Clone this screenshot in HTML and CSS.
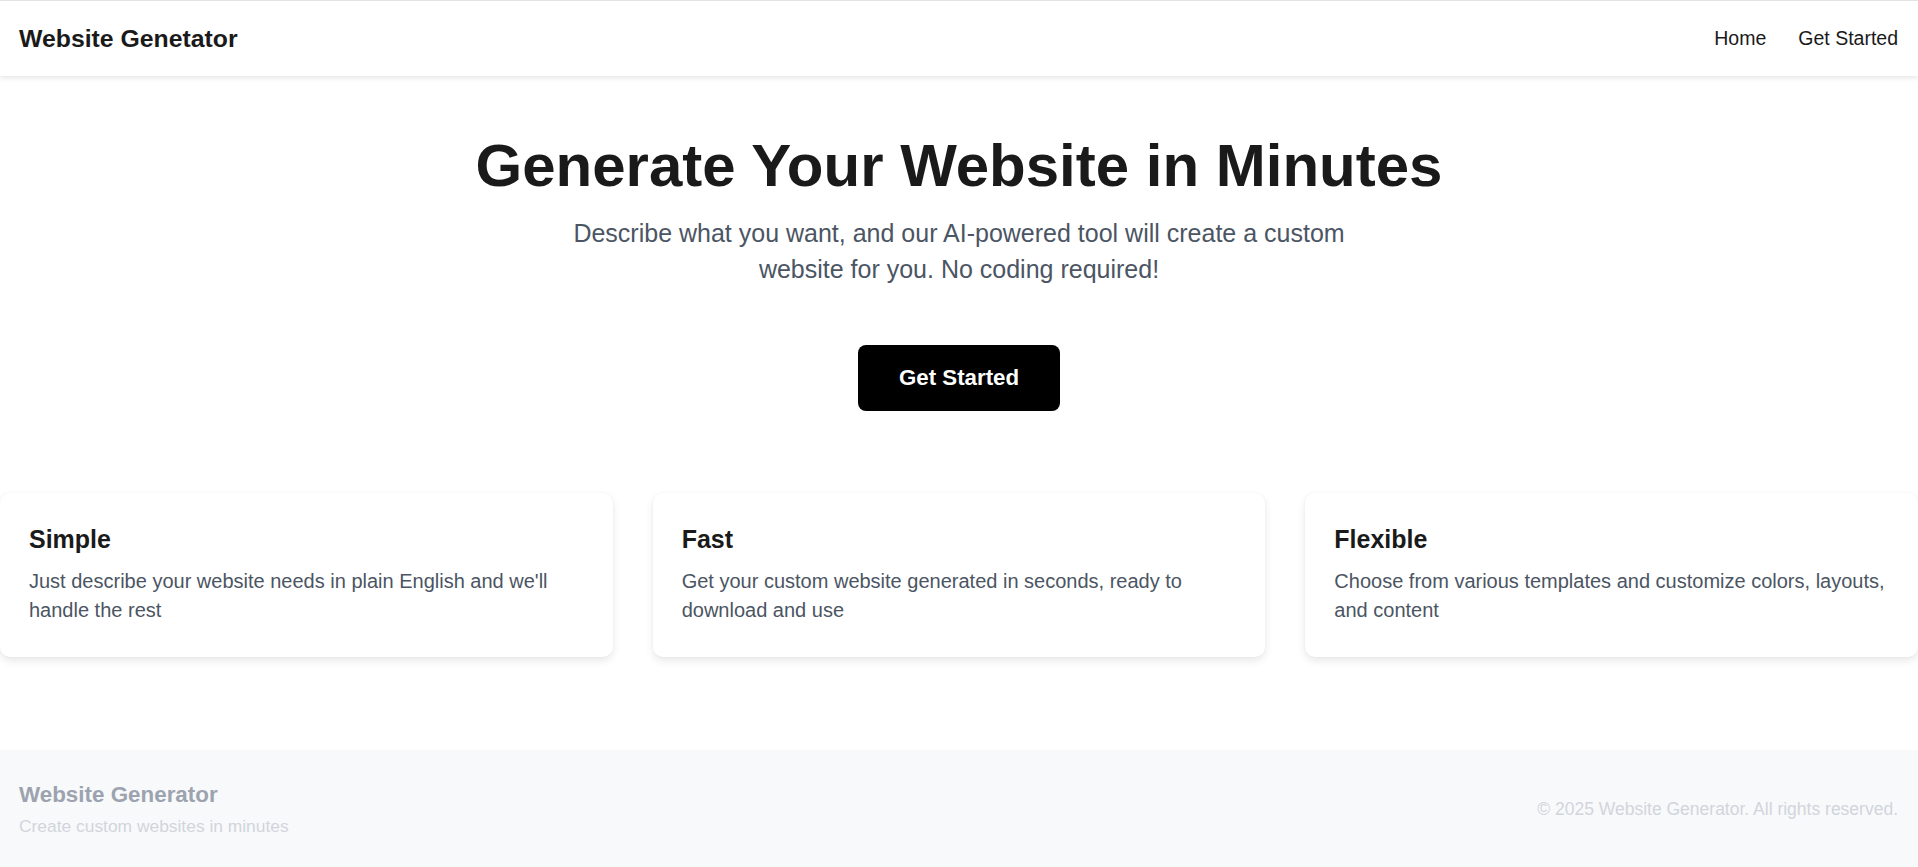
FILE: index.html
```html
<!DOCTYPE html>
<html lang="en">
<head>
<meta charset="utf-8">
<title>Website Generator</title>
<link rel="stylesheet" href="styles.css">
</head>
<body>
<header class="site-header">
  <div class="logo">Website Genetator</div>
  <nav class="nav">
    <a href="#" class="nav-link">Home</a>
    <a href="#" class="nav-link">Get Started</a>
  </nav>
</header>
<main>
  <section class="hero">
    <h1 class="hero-title">Generate Your Website in Minutes</h1>
    <p class="hero-sub">Describe what you want, and our AI-powered tool will create a custom website for you. No coding required!</p>
    <a href="#" class="btn">Get Started</a>
  </section>
  <section class="features">
    <div class="card">
      <h3 class="card-title">Simple</h3>
      <p class="card-text">Just describe your website needs in plain English and we'll handle the rest</p>
    </div>
    <div class="card">
      <h3 class="card-title">Fast</h3>
      <p class="card-text">Get your custom website generated in seconds, ready to download and use</p>
    </div>
    <div class="card">
      <h3 class="card-title">Flexible</h3>
      <p class="card-text">Choose from various templates and customize colors, layouts, and content</p>
    </div>
  </section>
</main>
<footer class="site-footer">
  <div class="footer-brand">
    <div class="footer-title">Website Generator</div>
    <div class="footer-sub">Create custom websites in minutes</div>
  </div>
  <div class="footer-copy">© 2025 Website Generator. All rights reserved.</div>
</footer>
</body>
</html>
```
FILE: styles.css
```css
* { box-sizing: border-box; }
html, body { margin: 0; padding: 0; }
body {
  font-family: "Liberation Sans", Arial, sans-serif;
  background: #ffffff;
  color: #1a1a1a;
}
.site-header {
  height: 76px;
  border-top: 1px solid #e3e3e3;
  background: #ffffff;
  box-shadow: 0 2px 5px rgba(0, 0, 0, 0.1);
  display: flex;
  align-items: center;
  justify-content: space-between;
  padding: 0 20px 0 19px;
  position: relative;
  z-index: 1;
}
.logo {
  font-size: 24.8px;
  font-weight: 700;
  color: #1a1a1a;
}
.nav {
  display: flex;
  gap: 32px;
}
.nav-link {
  font-size: 19.5px;
  color: #1a1a1a;
  text-decoration: none;
}
.hero {
  display: flex;
  flex-direction: column;
  align-items: center;
  text-align: center;
  padding-top: 54px;
}
.hero-title {
  margin: 0 0 13px;
  font-size: 60px;
  line-height: 72px;
  font-weight: 700;
  color: #1a1a1a;
}
.hero-sub {
  margin: 0 0 58px;
  max-width: 800px;
  font-size: 25px;
  line-height: 36px;
  color: #4b5563;
}
.btn {
  display: inline-block;
  background: #000000;
  color: #ffffff;
  text-decoration: none;
  font-size: 22.3px;
  font-weight: 700;
  padding: 20px 41px;
  border-radius: 8px;
}
.features {
  display: grid;
  grid-template-columns: repeat(3, 1fr);
  gap: 40px;
  margin: 82px 0 93px;
}
.card {
  background: #ffffff;
  border-radius: 10px;
  padding: 32px 29px;
  box-shadow: 0 4px 8px rgba(0, 0, 0, 0.09), 0 0 3px rgba(0, 0, 0, 0.04);
}
.card-title {
  margin: 0 0 13px;
  font-size: 25px;
  line-height: 28.75px;
  font-weight: 700;
  color: #1a1a1a;
}
.card-text {
  margin: 0;
  font-size: 20px;
  line-height: 29px;
  color: #4b5563;
}
.site-footer {
  background: #f8f9fb;
  padding: 32px 20px 32px 19px;
  display: flex;
  align-items: center;
  justify-content: space-between;
}
.footer-title {
  font-size: 22.4px;
  font-weight: 700;
  color: #9ca3af;
  margin-bottom: 8px;
}
.footer-sub {
  font-size: 17.4px;
  color: #d1d5db;
}
.footer-copy {
  font-size: 17.5px;
  color: #d1d5db;
}
```
